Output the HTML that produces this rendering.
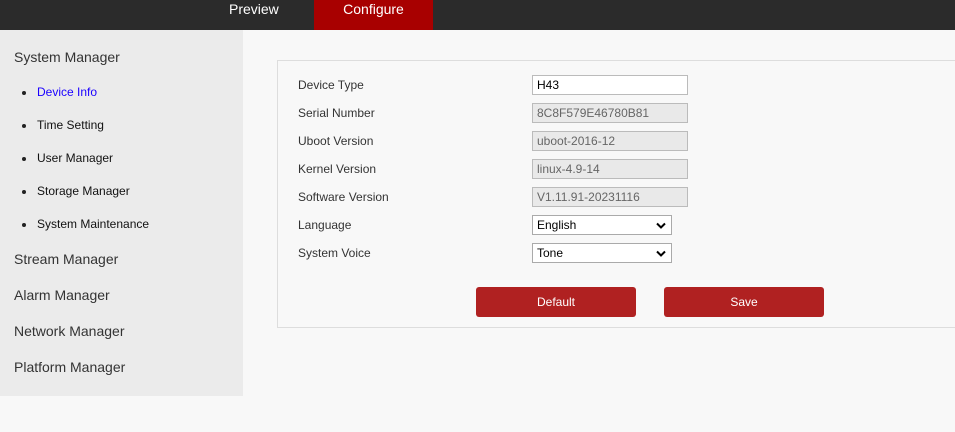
<!DOCTYPE html>
<html><head><style>
*{margin:0;padding:0;box-sizing:border-box}
body{width:955px;height:432px;background:#f8f8f8;font-family:"Liberation Sans",Arial,sans-serif;position:relative;overflow:hidden}
.top{position:absolute;left:0;top:0;width:955px;height:30px;background:#2b2b2b}
.top span{position:absolute;top:0;height:30px;line-height:19px;color:#fff;font-size:14px}
.cfg{left:314px;width:119px;background:#a80000;text-align:center}
.side{position:absolute;left:0;top:30px;width:243px;height:366px;background:#ebebeb}
.h{position:absolute;left:14px;font-size:14px;color:#333}
.i{position:absolute;left:37px;font-size:12px;color:#111}
.i:before{content:"";position:absolute;left:-15px;top:6px;width:4px;height:4px;border-radius:50%;background:#222}
.panel{position:absolute;left:277px;top:60px;width:700px;height:268px;border:1px solid #ddd;background:#f8f8f8}
.l{position:absolute;left:298px;font-size:12px;color:#333}
.f{position:absolute;left:532px;width:156px;height:20px;border:1px solid #bbb;font-size:12px;line-height:18px;padding-left:4px;color:#666;background:#e9e9e9}
.f.w{background:#fff;color:#000}
.s{position:absolute;left:532px;width:140px;height:20px;border:1px solid #aaa;background:#fff;font-size:12px;line-height:18px;padding-left:4px;color:#000}
.s svg{position:absolute;right:5px;top:6px}
.b{position:absolute;top:287px;width:160px;height:30px;background:#b02121;border-radius:3px;color:#fff;font-size:12px;text-align:center;line-height:30px}
</style></head><body>
<div class="top"><span style="left:229px">Preview</span><span class="cfg">Configure</span></div>
<div class="side"></div>
<div class="h" style="top:49px">System Manager</div>
<div class="i" style="top:85px;color:#1a00ff">Device Info</div>
<div class="i" style="top:118px">Time Setting</div>
<div class="i" style="top:151px">User Manager</div>
<div class="i" style="top:184px">Storage Manager</div>
<div class="i" style="top:217px">System Maintenance</div>
<div class="h" style="top:251px">Stream Manager</div>
<div class="h" style="top:287px">Alarm Manager</div>
<div class="h" style="top:323px">Network Manager</div>
<div class="h" style="top:359px">Platform Manager</div>
<div class="panel"></div>
<div class="l" style="top:78px">Device Type</div>
<div class="l" style="top:106px">Serial Number</div>
<div class="l" style="top:134px">Uboot Version</div>
<div class="l" style="top:162px">Kernel Version</div>
<div class="l" style="top:190px">Software Version</div>
<div class="l" style="top:218px">Language</div>
<div class="l" style="top:246px">System Voice</div>
<div class="f w" style="top:75px">H43</div>
<div class="f" style="top:103px">8C8F579E46780B81</div>
<div class="f" style="top:131px">uboot-2016-12</div>
<div class="f" style="top:159px">linux-4.9-14</div>
<div class="f" style="top:187px">V1.11.91-20231116</div>
<div class="s" style="top:215px">English<svg width="10" height="7" viewBox="0 0 10 7"><path d="M1 1.5L5 5.5L9 1.5" stroke="#000" stroke-width="2" fill="none"/></svg></div>
<div class="s" style="top:243px">Tone<svg width="10" height="7" viewBox="0 0 10 7"><path d="M1 1.5L5 5.5L9 1.5" stroke="#000" stroke-width="2" fill="none"/></svg></div>
<div class="b" style="left:476px">Default</div>
<div class="b" style="left:664px">Save</div>
</body></html>
